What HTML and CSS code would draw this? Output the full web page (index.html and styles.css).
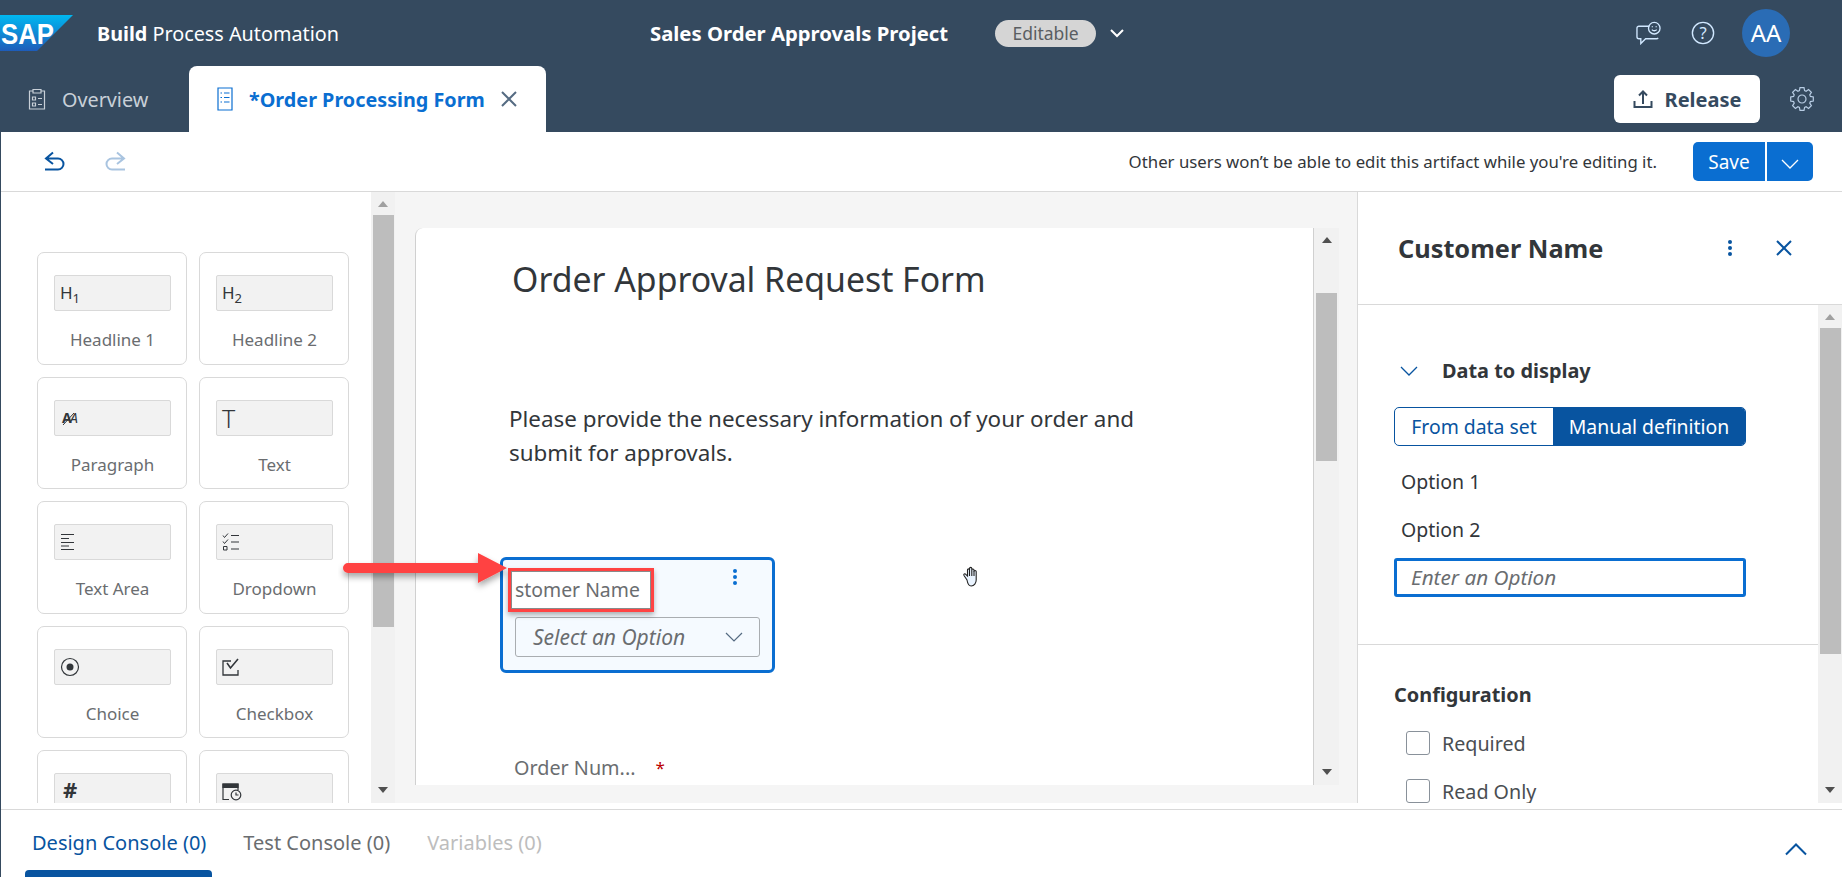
FILE: index.html
```html
<!DOCTYPE html>
<html lang="en">
<head>
    <meta charset="UTF-8">
    <title>Sales Order Approvals Project</title>
    <link rel="stylesheet" href="styles.css">
</head>

<body>
    <!-- Shell bar and tabs -->
    <header class="shell">
        <div class="shell-top">
            <svg class="logo" width="73" height="36" viewBox="0 0 73 36">
                <defs>
                    <linearGradient id="logoFill" x1="0" y1="0" x2="0" y2="1">
                        <stop offset="0" stop-color="#00b8f1"/>
                        <stop offset="1" stop-color="#1e5cba"/>
                    </linearGradient>
                </defs>
                <polygon points="0,0 73,0 37,36 0,36" fill="url(#logoFill)"/>
                <text x="1" y="29" class="logo-text" textLength="53" lengthAdjust="spacingAndGlyphs">SAP</text>
            </svg>
            <div class="product"><b>Build</b> Process Automation</div>
            <div class="project">Sales Order Approvals Project</div>
            <div class="pill">Editable</div>
            <svg class="project-arrow" width="16" height="10" viewBox="0 0 16 10"><path d="M2 2l6 6 6-6" fill="none" stroke="#fff" stroke-width="2"/></svg>
            <div class="shell-icons">
                <svg class="feedback" width="25" height="24" viewBox="0 0 26 24" fill="none" stroke="#d1e8ff" stroke-width="1.4">
                    <path d="M14 5H3a2 2 0 0 0-2 2v9a2 2 0 0 0 2 2h2v5l5-5h11a2 2 0 0 0 2-1"/>
                    <circle cx="19" cy="7" r="6"/>
                    <path d="M16.5 8.5c1.300 1.500 3.700 1.500 5 0M17 5v1M21 5v1"/>
                </svg>
                <svg width="24" height="24" viewBox="0 0 26 26">
                    <circle cx="13" cy="13" r="11.500" fill="none" stroke="#d1e8ff" stroke-width="1.500"/>
                    <text x="13" y="19" class="help-mark">?</text>
                </svg>
                <div class="avatar">AA</div>
            </div>
        </div>
        <div class="shell-tabs">
            <div class="tab">
                <svg width="18" height="22" viewBox="0 0 18 22" fill="none" stroke="#c8d0d8" stroke-width="1.200">
                    <path d="M5 3H1.500v18h15V3H13M5 1.500h8V5H5z"/>
                    <path d="M4.500 9h3v3h-3zM4.500 15h3v3h-3zM10 10.500h4M10 16.500h4"/>
                </svg>
                <span>Overview</span>
            </div>
            <div class="tab tab-active">
                <svg width="16" height="24" viewBox="0 0 16 24" fill="none" stroke="#0a6ed1" stroke-width="1.200">
                    <path d="M1 1h14v22H1z"/>
                    <path d="M3.500 6h1.500M7 6h5.500M3.500 10.500h1.500M7 10.500h5.500M3.500 15h1.500M7 15h5.500"/>
                </svg>
                <span class="tab-title">*Order Processing Form</span>
                <svg width="16" height="16" viewBox="0 0 16 16"><path d="M1 1l14 14M15 1L1 15" stroke="#556b82" stroke-width="2"/></svg>
            </div>
            <button class="release">
                <svg width="20" height="20" viewBox="0 0 20 20" fill="none" stroke="#354a5f" stroke-width="2">
                    <path d="M1.500 12v6h17v-6M10 15V3M6 6.500L10 2.500l4 4"/>
                </svg>
                Release
            </button>
            <svg class="gear" width="24" height="24" viewBox="-12 -12 24 24" fill="none" stroke="#b8cde4" stroke-width="1.200">
                <path d="M-2.600 -8.400L-2 -11.300L2 -11.300L2.600 -8.400L4.100 -7.780L6.580 -9.400L9.400 -6.580L7.780 -4.100L8.400 -2.600L11.300 -2L11.300 2L8.400 2.600L7.780 4.100L9.400 6.580L6.580 9.400L4.100 7.780L2.600 8.400L2 11.300L-2 11.300L-2.600 8.400L-4.100 7.780L-6.580 9.400L-9.400 6.580L-7.780 4.100L-8.400 2.600L-11.300 2L-11.300 -2L-8.400 -2.600L-7.780 -4.100L-9.400 -6.580L-6.580 -9.400L-4.100 -7.780Z"/>
                <circle r="4"/>
            </svg>
        </div>
    </header>

    <div class="page">
        <!-- Undo, redo, save -->
        <div class="toolbar">
            <svg width="22" height="22" viewBox="0 0 22 22" fill="none" stroke="#0854a0" stroke-width="2">
                <path d="M9 1.500L2 7.500l7 5.500M2 7.500h12a5.500 5.500 0 0 1 0 11H1"/>
            </svg>
            <svg class="redo" width="22" height="22" viewBox="0 0 22 22" fill="none" stroke="#a9c4e0" stroke-width="2">
                <path d="M13 1.500l7 6-7 5.500M20 7.500H8a5.500 5.500 0 0 0 0 11h13"/>
            </svg>
            <div class="lock-note">Other users won’t be able to edit this artifact while you're editing it.</div>
            <div class="save-group">
                <button class="save">Save</button>
                <button class="save-more">
                    <svg width="18" height="10" viewBox="0 0 18 10"><path d="M1 1l8 8 8-8" fill="none" stroke="#fff" stroke-width="1.300"/></svg>
                </button>
            </div>
        </div>

        <main class="workspace">
            <!-- Control palette -->
            <section class="palette">
                <div class="palette-grid">
                    <div class="control">
                        <div class="control-preview"><span class="glyph">H<sub>1</sub></span></div>
                        <div class="control-name">Headline 1</div>
                    </div>
                    <div class="control">
                        <div class="control-preview"><span class="glyph">H<sub>2</sub></span></div>
                        <div class="control-name">Headline 2</div>
                    </div>
                    <div class="control">
                        <div class="control-preview">
                            <svg class="para-icon" width="22" height="22" viewBox="0 0 22 22">
                                <text x="1" y="16" class="para-bold">A</text>
                                <text x="9" y="16" class="para-thin">A</text>
                                <path d="M2 18L13 6" stroke="#32363a" stroke-width="1"/>
                            </svg>
                        </div>
                        <div class="control-name">Paragraph</div>
                    </div>
                    <div class="control">
                        <div class="control-preview"><span class="glyph glyph-big">T</span></div>
                        <div class="control-name">Text</div>
                    </div>
                    <div class="control">
                        <div class="control-preview">
                            <svg width="16" height="18" viewBox="0 0 16 18" stroke="#32363a"><path d="M1 1.500h13M1 5.500h8M1 9.500h13M1 13h8M1 16.500h13"/></svg>
                        </div>
                        <div class="control-name">Text Area</div>
                    </div>
                    <div class="control">
                        <div class="control-preview">
                            <svg width="18" height="18" viewBox="0 0 18 18" fill="none" stroke="#32363a"><path d="M1 2.500l1.500 2L6 .500M1 8.500l1.500 2L6 6.500M1.500 13.500h3.500v3.500H1.500zM9 2.500h8M9 9h8M9 16h8"/></svg>
                        </div>
                        <div class="control-name">Dropdown</div>
                    </div>
                    <div class="control">
                        <div class="control-preview">
                            <svg width="20" height="20" viewBox="0 0 20 20"><circle cx="10" cy="10" r="8.500" fill="none" stroke="#32363a" stroke-width="1.200"/><circle cx="10" cy="10" r="3.500" fill="#32363a"/></svg>
                        </div>
                        <div class="control-name">Choice</div>
                    </div>
                    <div class="control">
                        <div class="control-preview">
                            <svg width="18" height="18" viewBox="0 0 18 18" fill="none" stroke="#32363a" stroke-width="1.300"><path d="M9 3H1v14h15v-5"/><path d="M5 5l3.500 5L16 1" stroke-width="1.600"/></svg>
                        </div>
                        <div class="control-name">Checkbox</div>
                    </div>
                    <div class="control">
                        <div class="control-preview control-preview-top"><span class="glyph glyph-hash">#</span></div>
                    </div>
                    <div class="control">
                        <div class="control-preview">
                            <svg width="20" height="20" viewBox="0 0 20 20" fill="none" stroke="#32363a" stroke-width="1.200"><path d="M7 18.500H1V3h15v6"/><path d="M1 3h15v3.500H1z" fill="#32363a"/><circle cx="14" cy="14" r="4.800"/><path d="M14 11.500V14h2.500"/></svg>
                        </div>
                    </div>
                </div>
            </section>
            <div class="scrollbar palette-bar">
                <span class="arrow-up arrow-light"></span>
                <div class="track"><div class="thumb"></div></div>
                <span class="arrow-down"></span>
            </div>

            <!-- Form canvas -->
            <section class="canvas">
                <div class="form">
                    <div class="form-body">
                        <h1 class="form-title">Order Approval Request Form</h1>
                        <p class="form-intro">Please provide the necessary information of your order and submit for approvals.</p>
                        <div class="field-selected">
                            <div class="field-head">
                                <div class="field-label">stomer Name</div>
                                <svg class="dots" width="6" height="18" viewBox="0 0 6 18" fill="#0a6ed1"><circle cx="3" cy="3" r="2"/><circle cx="3" cy="9" r="2"/><circle cx="3" cy="15" r="2"/></svg>
                            </div>
                            <div class="select-box">
                                <span>Select an Option</span>
                                <svg width="18" height="10" viewBox="0 0 18 10"><path d="M1 1l8 8 8-8" fill="none" stroke="#556b82" stroke-width="1.200"/></svg>
                            </div>
                        </div>
                        <div class="next-field">
                            <span>Order Num...</span>
                            <span class="required-mark">*</span>
                        </div>
                    </div>
                    <div class="scrollbar form-bar">
                        <span class="arrow-up"></span>
                        <div class="track"><div class="thumb"></div></div>
                        <span class="arrow-down"></span>
                    </div>
                </div>
            </section>

            <!-- Properties panel -->
            <aside class="props">
                <div class="props-head">
                    <div class="props-title">Customer Name</div>
                    <svg width="6" height="18" viewBox="0 0 6 18" fill="#0854a0"><circle cx="3" cy="3" r="2"/><circle cx="3" cy="9" r="2"/><circle cx="3" cy="15" r="2"/></svg>
                    <svg width="18" height="18" viewBox="0 0 18 18"><path d="M2 2l14 14M16 2L2 16" stroke="#0854a0" stroke-width="2"/></svg>
                </div>
                <div class="props-scroll">
                    <div class="props-body">
                        <div class="section section-data">
                            <div class="section-toggle">
                                <svg width="18" height="10" viewBox="0 0 18 10"><path d="M1 1l8 8 8-8" fill="none" stroke="#0854a0" stroke-width="1.300"/></svg>
                                <span>Data to display</span>
                            </div>
                            <div class="segmented">
                                <div class="segment">From data set</div>
                                <div class="segment segment-on">Manual definition</div>
                            </div>
                            <div class="option">Option 1</div>
                            <div class="option">Option 2</div>
                            <div class="option-input">Enter an Option</div>
                        </div>
                        <div class="section section-config">
                            <div class="section-title">Configuration</div>
                            <label class="check"><span class="check-box"></span>Required</label>
                            <label class="check"><span class="check-box"></span>Read Only</label>
                        </div>
                    </div>
                    <div class="scrollbar props-bar">
                        <span class="arrow-up arrow-light"></span>
                        <div class="track"><div class="thumb"></div></div>
                        <span class="arrow-down"></span>
                    </div>
                </div>
            </aside>
        </main>

        <!-- Console tabs -->
        <footer class="console">
            <div class="console-tab console-tab-on">Design Console (0)</div>
            <div class="console-tab">Test Console (0)</div>
            <div class="console-tab console-tab-off">Variables (0)</div>
            <svg class="console-toggle" width="22" height="13" viewBox="0 0 22 13"><path d="M1 11.500l10-10 10 10" fill="none" stroke="#0854a0" stroke-width="2"/></svg>
        </footer>
    </div>

    <!-- Callout arrow drawn over the screenshot -->
    <svg class="callout" width="180" height="44" viewBox="0 0 180 44">
        <defs>
            <filter id="calloutShadow" x="-5%" y="-30%" width="110%" height="170%">
                <feDropShadow dx="0" dy="4" stdDeviation="3" flood-color="#000" flood-opacity="0.35"/>
            </filter>
        </defs>
        <path d="M10 10h130V0l29 15-29 15V20H10a5 5 0 0 1 0-10z" fill="#ff4343" filter="url(#calloutShadow)"/>
    </svg>

    <!-- Mouse pointer -->
    <svg class="hand" width="20" height="22" viewBox="0 0 20 22" fill="#eaf4ff" stroke="#222" stroke-width="1.100">
        <path d="M5 14L2 9.500c-.8-1.300.8-2.300 1.800-1.200L5.500 10V4c0-1.500 2-1.500 2 0V2.500c0-1.500 2.300-1.500 2.300 0V4c0-1.400 2.200-1.400 2.200 0v1.500c0-1.300 2.200-1.300 2.200 0V14c0 3-2 6-5 6-2.500 0-3.700-3-4.200-6z"/>
        <path d="M7.500 4v6M9.800 4v6M12 5v5" fill="none"/>
    </svg>
</body>

</html>
```

FILE: styles.css
```css
html, body {
    margin: 0;
    padding: 0;
    width: 1842px;
    height: 877px;
    overflow: hidden;
}

body {
    position: relative;
    background-color: #fff;
    color: #32363a;
    font-family: "Noto Sans", Arial, sans-serif;
}

button {
    border: none;
    font-family: inherit;
    cursor: pointer;
}

/* Shell bar */
.shell {
    height: 132px;
    background-color: #354a5f;
    color: #fff;
}

.shell-top {
    display: flex;
    align-items: center;
    height: 66px;
}

.logo {
    flex: none;
}

.logo-text {
    fill: #fff;
    font-family: "Liberation Sans", Arial, sans-serif;
    font-size: 30px;
    font-weight: bold;
}

.product {
    margin-left: 24px;
    width: 553px;
    font-size: 19.800px;
}

.project {
    font-size: 20.300px;
    font-weight: bold;
}

.pill {
    margin-left: 47px;
    width: 101px;
    height: 27px;
    border-radius: 14px;
    background-color: #d5d5d5;
    color: #5a5e62;
    font-size: 17.500px;
    line-height: 27px;
    text-align: center;
}

.project-arrow {
    margin-left: 13px;
}

.shell-icons {
    display: flex;
    align-items: center;
    gap: 27px;
    margin-left: auto;
    margin-right: 52px;
}

.feedback {
    margin-right: 3px;
}

.avatar {
    width: 48px;
    height: 48px;
    border-radius: 50%;
    background-color: #2a6cb5;
    font-size: 24px;
    line-height: 48px;
    text-align: center;
}

/* Tabs */
.shell-tabs {
    display: flex;
    align-items: center;
    height: 66px;
}

.tab {
    display: flex;
    align-items: center;
    height: 66px;
    padding-left: 28px;
    width: 189px;
    box-sizing: border-box;
    gap: 16px;
    color: #c8d0d8;
    font-size: 19.800px;
}

.tab-active {
    width: 357px;
    padding-left: 28px;
    border-radius: 8px 8px 0 0;
    background-color: #fff;
    color: #0a6ed1;
    font-weight: bold;
}

.release {
    display: flex;
    align-items: center;
    justify-content: center;
    gap: 12px;
    width: 146px;
    height: 48px;
    margin-left: auto;
    border-radius: 6px;
    background-color: #fff;
    color: #354a5f;
    font-size: 20px;
    font-weight: bold;
}

.gear {
    margin: 0 28px 0 30px;
}

/* Toolbar */
.page {
    border-left: 1px solid #354a5f;
}

.toolbar {
    display: flex;
    align-items: center;
    height: 59px;
    padding: 0 29px 0 43px;
    border-bottom: 1px solid #d9d9d9;
}

.redo {
    margin-left: 38px;
}

.lock-note {
    margin-left: auto;
    font-size: 16.800px;
}

.save-group {
    display: flex;
    gap: 2px;
    margin-left: 36px;
}

.save,
.save-more {
    height: 39px;
    background-color: #0a6ed1;
    color: #fff;
    font-size: 19px;
}

.save {
    width: 72px;
    border-radius: 5px 0 0 5px;
}

.save-more {
    width: 46px;
    padding: 0;
    border-radius: 0 5px 5px 0;
}

/* Three-pane workspace */
.workspace {
    display: flex;
    height: 611px;
    overflow: hidden;
}

.scrollbar {
    display: flex;
    flex: none;
    flex-direction: column;
    align-items: center;
    width: 24px;
    background-color: #f1f1f1;
}

.track {
    flex: 1;
    align-self: stretch;
    padding: 0 1px;
}

.thumb {
    background-color: #bdbdbd;
}

.arrow-up,
.arrow-down {
    flex: none;
    width: 0;
    height: 0;
    border-left: 5.500px solid transparent;
    border-right: 5.500px solid transparent;
}

.arrow-up {
    margin: 9px 0 8px;
    border-bottom: 6px solid #505050;
}

.arrow-down {
    margin: 8px 0 10px;
    border-top: 6px solid #505050;
}

.arrow-light {
    border-bottom-color: #a0a0a0;
}

/* Control palette */
.palette {
    flex: none;
    width: 370px;
    box-sizing: border-box;
    padding: 60px 0 0 36px;
    overflow: hidden;
}

.palette-grid {
    display: grid;
    grid-template-columns: 150px 150px;
    grid-auto-rows: 112.500px;
    gap: 12px;
}

.control {
    box-sizing: border-box;
    padding: 22px 15px 0 16px;
    border: 1px solid #d9d9d9;
    border-radius: 7px;
}

.control-preview {
    display: flex;
    align-items: center;
    box-sizing: border-box;
    height: 36px;
    padding-left: 5px;
    border: 1px solid #d9d9d9;
    border-radius: 2px;
    background-color: #f2f2f2;
}

.control-preview-top {
    align-items: flex-start;
}

.control-name {
    margin-top: 18px;
    color: #6a6d70;
    font-size: 17px;
    line-height: 22px;
    text-align: center;
}

.glyph {
    font-size: 17px;
    line-height: 20px;
    white-space: nowrap;
}

.glyph sub {
    font-size: 13px;
    line-height: 0;
}

.para-icon {
    margin-left: 1px;
}

.para-bold {
    fill: #32363a;
    font-size: 14px;
    font-weight: bold;
}

.para-thin {
    fill: #32363a;
    font-size: 14px;
    font-style: italic;
}

.glyph-big {
    font-size: 25px;
    font-weight: 300;
}

.glyph-hash {
    font-size: 22px;
    font-weight: bold;
    line-height: 30px;
    margin-left: 3px;
}

/* Form canvas */
.canvas {
    display: flex;
    flex: 1;
    box-sizing: border-box;
    padding: 36px 18px 18px 20px;
    background-color: #f5f5f5;
}

.form {
    display: flex;
    flex: 1;
    min-width: 0;
    border-left: 1px solid #d0d0d0;
    border-top-left-radius: 8px;
    background-color: #fff;
}

.form-body {
    flex: 1;
    padding: 1px 0 0 84px;
    overflow: hidden;
}

.form-title {
    margin: 28px 0 0 12px;
    font-size: 33.800px;
    font-weight: 400;
    line-height: 44px;
}

.form-intro {
    width: 670px;
    margin: 101px 0 0 9px;
    font-size: 22.400px;
    line-height: 34px;
}

.field-selected {
    box-sizing: border-box;
    width: 275px;
    height: 116px;
    margin-top: 87px;
    padding: 8px 12px 0 5px;
    border: 3px solid #0a6ed1;
    border-radius: 6px;
    background-color: #f5faff;
}

.field-head {
    display: flex;
    align-items: flex-start;
    justify-content: space-between;
}

.field-label {
    box-sizing: border-box;
    width: 146px;
    height: 44px;
    padding-left: 4px;
    border: 3px solid #ff4343;
    background-color: #fff;
    box-shadow: inset 0 0 0 1px #8a8a8a, 0 3px 5px rgba(0, 0, 0, 0.3);
    color: #6a6d70;
    font-size: 19.400px;
    line-height: 38px;
    white-space: nowrap;
}

.dots {
    margin-right: 22px;
}

.select-box {
    display: flex;
    align-items: center;
    justify-content: space-between;
    box-sizing: border-box;
    width: 245px;
    height: 40px;
    margin: 5px 0 0 7px;
    padding: 0 16px 0 17px;
    border: 1px solid #a9adb1;
    border-radius: 3px;
    color: #6a6d70;
    font-size: 21px;
    font-style: italic;
    line-height: 36px;
}

.next-field {
    display: flex;
    gap: 20px;
    margin: 80px 0 0 14px;
    color: #6a6d70;
    font-size: 19.800px;
    line-height: 30px;
}

.required-mark {
    color: #bb0000;
    font-size: 17px;
}

.form-bar {
    width: 26px;
    border-left: 1px solid #d0d0d0;
    box-sizing: border-box;
}

.form-bar .thumb {
    height: 168px;
    margin: 42px 1px 0;
}

.palette-bar {
    margin-left: 0;
    width: 24px;
}

.palette-bar .thumb {
    height: 412px;
    margin-left: 1px;
}

/* Properties panel */
.props {
    display: flex;
    flex: none;
    flex-direction: column;
    box-sizing: border-box;
    width: 485px;
    border-left: 1px solid #d9d9d9;
}

.props-head {
    display: flex;
    flex: none;
    align-items: center;
    gap: 42px;
    box-sizing: border-box;
    height: 113px;
    padding: 0 49px 0 40px;
    border-bottom: 1px solid #d9d9d9;
}

.props-title {
    flex: 1;
    font-size: 25.300px;
    font-weight: bold;
}

.props-scroll {
    display: flex;
    flex: 1;
    min-height: 0;
}

.props-body {
    flex: 1;
    overflow: hidden;
}

.section-data {
    box-sizing: border-box;
    height: 340px;
    padding: 54px 0 0 36px;
    border-bottom: 1px solid #d9d9d9;
}

.section-toggle {
    display: flex;
    align-items: center;
    gap: 24px;
    margin-left: 6px;
    font-size: 19.900px;
    font-weight: bold;
    line-height: 24px;
}

.segmented {
    display: flex;
    box-sizing: border-box;
    width: 352px;
    height: 39px;
    margin: 24px 0 2px;
    border: 1px solid #0854a0;
    border-radius: 5px;
    overflow: hidden;
    font-size: 19.400px;
    line-height: 37px;
    text-align: center;
}

.segment {
    width: 158px;
    color: #0854a0;
}

.segment-on {
    flex: 1;
    background-color: #0854a0;
    color: #fff;
}

.option {
    margin: 0 0 0 7px;
    padding-top: 19px;
    font-size: 19.500px;
    line-height: 29px;
}

.option-input {
    box-sizing: border-box;
    width: 352px;
    height: 39px;
    margin-top: 14px;
    padding-left: 14px;
    border: 3px solid #0a6ed1;
    border-radius: 3px;
    color: #6a6d70;
    font-size: 20.700px;
    font-style: italic;
    line-height: 33px;
}

.section-config {
    padding: 36px 0 0 36px;
}

.section-title {
    font-size: 19.900px;
    font-weight: bold;
    line-height: 28px;
}

.check {
    display: flex;
    align-items: center;
    gap: 12px;
    height: 24px;
    margin: 22px 0 24px 12px;
    font-size: 19.700px;
    color: #4a4e52;
}

.check + .check {
    margin-top: 24px;
}

.check-box {
    box-sizing: border-box;
    width: 24px;
    height: 24px;
    border: 1px solid #89919a;
    border-radius: 3px;
}

.props-bar .thumb {
    height: 326px;
    margin: 0 0 0 1px;
}

/* Console tabs */
.console {
    display: flex;
    align-items: flex-start;
    box-sizing: border-box;
    height: 74px;
    margin-top: 6px;
    padding-left: 31px;
    border-top: 1px solid #d9d9d9;
    position: relative;
    font-size: 20px;
    gap: 37px;
    color: #6a6d70;
}

.console-tab {
    padding-top: 20px;
    line-height: 26px;
}

.console-tab-on {
    position: relative;
    color: #0854a0;
}

/* Selected tab underline sits below the label */
.console-tab-on::after {
    content: "";
    position: absolute;
    left: -7px;
    right: -6px;
    top: 60px;
    height: 7px;
    border-radius: 4px 4px 0 0;
    background-color: #0854a0;
}

.console-tab-off {
    color: #bdbdbd;
}

.console-toggle {
    margin: 33px 35px 0 auto;
}

/* Overlays */
.callout {
    position: absolute;
    left: 338px;
    top: 553px;
}

.hand {
    position: absolute;
    left: 962px;
    top: 566px;
}

.help-mark {
    fill: #d1e8ff;
    font-size: 18px;
    text-anchor: middle;
}
```
